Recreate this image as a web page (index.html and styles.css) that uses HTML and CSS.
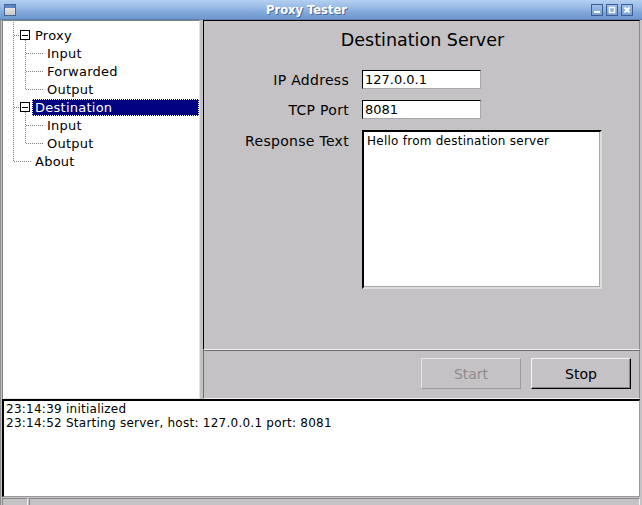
FILE: index.html
```html
<!DOCTYPE html>
<html>
<head>
<meta charset="utf-8">
<title>Proxy Tester</title>
<link rel="stylesheet" href="styles.css">
</head>
<body>
<div class="window">
  <div class="titlebar">
    <span class="app-icon"><span class="app-icon-bar"></span></span>
    <span class="title">Proxy Tester</span>
    <span class="wbtns">
      <span class="wbtn"><svg width="10" height="10" viewBox="0 0 10 10"><rect x="2" y="6" width="6" height="2" fill="#fff"/></svg></span>
      <span class="wbtn"><svg width="10" height="10" viewBox="0 0 10 10"><rect x="2.5" y="2.5" width="5" height="5" fill="none" stroke="#fff" stroke-width="1.4"/></svg></span>
      <span class="wbtn"><svg width="10" height="10" viewBox="0 0 10 10"><path d="M2.5 2.5L7.5 7.5M7.5 2.5L2.5 7.5" stroke="#fff" stroke-width="1.8"/></svg></span>
    </span>
  </div>
  <div class="client">
    <div class="top">
      <div class="tree">
        <svg class="tree-lines" width="196" height="150" viewBox="0 0 196 150">
          <g stroke="#808080" stroke-width="1" stroke-dasharray="1 1" fill="none">
            <path d="M10.5 0V140"/>
            <path d="M11 13.5H17"/>
            <path d="M11 85.5H17"/>
            <path d="M11 139.5H29"/>
            <path d="M22.5 18V67"/>
            <path d="M23 31.5H41"/>
            <path d="M23 49.5H41"/>
            <path d="M23 67.5H41"/>
            <path d="M22.5 90V121"/>
            <path d="M23 103.5H41"/>
            <path d="M23 121.5H41"/>
          </g>
          <g stroke="#000" stroke-width="1" fill="#fff">
            <rect x="17.5" y="8.5" width="9" height="9"/>
            <rect x="17.5" y="80.5" width="9" height="9"/>
          </g>
          <g stroke="#000" stroke-width="1">
            <path d="M19 13.5H25"/>
            <path d="M19 85.5H25"/>
          </g>
        </svg>
        <div class="row lvl0"><span class="label">Proxy</span></div>
        <div class="row lvl1"><span class="label">Input</span></div>
        <div class="row lvl1"><span class="label">Forwarded</span></div>
        <div class="row lvl1"><span class="label">Output</span></div>
        <div class="row lvl0"><span class="label selected">Destination</span></div>
        <div class="row lvl1"><span class="label">Input</span></div>
        <div class="row lvl1"><span class="label">Output</span></div>
        <div class="row lvl0"><span class="label">About</span></div>
      </div>
      <div class="splitter"></div>
      <div class="right">
        <div class="form">
          <div class="heading">Destination Server</div>
          <div class="fields">
            <div class="flabel">IP Address</div>
            <div class="input">127.0.0.1</div>
            <div class="flabel">TCP Port</div>
            <div class="input">8081</div>
            <div class="flabel top-align">Response Text</div>
            <div class="textarea">Hello from destination server</div>
          </div>
        </div>
        <div class="buttonbar">
          <div class="btn disabled">Start</div>
          <div class="btn">Stop</div>
        </div>
      </div>
    </div>
    <div class="log">
      <div class="logline">23:14:39 initialized</div>
      <div class="logline">23:14:52 Starting server, host: 127.0.0.1 port: 8081</div>
    </div>
    <div class="status">
      <div class="sbox small"></div>
      <div class="sbox wide"></div>
    </div>
  </div>
</div>
</body>
</html>
```
FILE: styles.css
```css
html, body {
  margin: 0;
  padding: 0;
  background: #c4c2c4;
}
body {
  width: 642px;
  height: 505px;
  overflow: hidden;
  font-family: "DejaVu Sans", "Liberation Sans", sans-serif;
  color: #000;
}
.window {
  width: 642px;
  height: 505px;
  display: flex;
  flex-direction: column;
  background: #c4c2c4;
}
.titlebar {
  height: 20px;
  flex: none;
  display: flex;
  align-items: center;
  background: linear-gradient(#b3cff0 0%, #9bbde6 35%, #7ea5d8 70%, #6f98cf 100%);
  border-bottom: 1px solid #5b7fb0;
  box-sizing: border-box;
}
.app-icon {
  width: 12px;
  height: 12px;
  margin-left: 4px;
  border: 1px solid #45679a;
  background: linear-gradient(#f2f2f2, #c8c8c8);
  box-sizing: border-box;
  display: flex;
  flex-direction: column;
}
.app-icon-bar {
  height: 3px;
  background: #5c86c4;
}
.title {
  flex: 1;
  text-align: center;
  color: #fff;
  font-weight: bold;
  font-size: 11.5px;
  text-shadow: 1px 1px 0 #4a6a98;
  padding-left: 6px;
}
.wbtns {
  display: flex;
  gap: 3px;
  margin-right: 9px;
}
.wbtn {
  width: 12px;
  height: 12px;
  box-sizing: border-box;
  border: 1px solid #3d5d92;
  background: linear-gradient(#9fbfe8, #7aa0d4);
  display: flex;
  align-items: center;
  justify-content: center;
}
.client {
  flex: 1;
  display: flex;
  flex-direction: column;
  padding: 0 2px 0 2px;
  border-left: 1px solid #8e8e8e;
  min-height: 0;
}
.top {
  height: 379px;
  flex: none;
  display: flex;
}
.tree {
  width: 198px;
  flex: none;
  box-sizing: border-box;
  background: #fff;
  border: 1px solid;
  border-color: #808080 #e4e4e4 #e4e4e4 #808080;
  padding-top: 5px;
  position: relative;
  margin-left: -1px;
}
.tree-lines {
  position: absolute;
  left: 0;
  top: 1px;
}
.row {
  height: 18px;
  display: flex;
  align-items: center;
  font-size: 13px;
  letter-spacing: 0.25px;
}
.row.lvl0 { padding-left: 29px; }
.row.lvl1 { padding-left: 41px; }
.label {
  padding: 0 3px;
  height: 17px;
  line-height: 17px;
  box-sizing: border-box;
}
.label.selected {
  flex: 1;
  background: #000080;
  color: #fff;
  outline: 1px dotted #fff;
  outline-offset: -1px;
}
.splitter {
  width: 3px;
  flex: none;
  background: #c4c2c4;
}
.right {
  flex: 1;
  display: flex;
  flex-direction: column;
}
.form {
  height: 330px;
  box-sizing: border-box;
  border: 1px solid;
  border-color: #000 #8a8a8a #f0f0f0 #000;
  padding-top: 8px;
}
.heading {
  text-align: center;
  font-size: 17.5px;
  line-height: 22px;
  height: 22px;
  margin-bottom: 19px;
  padding-left: 2px;
}
.fields {
  display: grid;
  grid-template-columns: 145px 240px;
  grid-template-rows: 19px 19px 159px;
  column-gap: 13px;
  row-gap: 11px;
  font-size: 14px;
}
.flabel {
  text-align: right;
  align-self: center;
  line-height: 19px;
  padding-top: 1px;
  letter-spacing: 0.3px;
}
.flabel.top-align {
  align-self: start;
  line-height: 20px;
}
.input {
  width: 119px;
  height: 19px;
  box-sizing: border-box;
  background: #fff;
  border: 1px solid;
  border-color: #000 #a8a8a8 #a8a8a8 #000;
  padding-left: 2px;
  line-height: 18px;
  font-size: 13px;
}
.textarea {
  width: 240px;
  height: 159px;
  box-sizing: border-box;
  background: #fff;
  border-style: solid;
  border-width: 2px;
  border-color: #000 #dcdcdc #dcdcdc #000;
  box-shadow: inset -1px -1px 0 #a8a8a8;
  padding: 1px 0 0 3px;
  line-height: 16px;
  font-size: 12px;
  letter-spacing: 0.25px;
}
.buttonbar {
  flex: 1;
  box-sizing: border-box;
  border: 1px solid;
  border-color: #707070 #8a8a8a #f0f0f0 #707070;
  display: flex;
  justify-content: flex-end;
  align-items: flex-start;
  gap: 10px;
  padding: 7px 8px 0 0;
}
.btn {
  width: 100px;
  height: 31px;
  box-sizing: border-box;
  border: 1px solid;
  border-color: #f4f4f4 #000 #000 #f4f4f4;
  box-shadow: inset -1px -1px 0 #8a8a8a;
  display: flex;
  align-items: center;
  justify-content: center;
  font-size: 14px;
  color: #000;
}
.btn.disabled {
  color: #8e8c8e;
  border-color: #e6e6e6 #9a9a9a #9a9a9a #e6e6e6;
  box-shadow: none;
}
.log {
  height: 98px;
  flex: none;
  box-sizing: border-box;
  background: #fff;
  border-style: solid;
  border-width: 2px 1px 1px 2px;
  border-color: #000 #9a9a9a #9a9a9a #000;
  padding: 1px 0 0 2px;
  font-size: 12px;
  letter-spacing: 0.25px;
  line-height: 14px;
  margin-left: -1px;
}
.logline {
  height: 14px;
  white-space: nowrap;
}
.status {
  flex: 1;
  display: flex;
  gap: 1px;
  padding-top: 1px;
  margin-left: -1px;
}
.sbox {
  box-sizing: border-box;
  border: 1px solid;
  border-color: #8a8a8a #f0f0f0 #f0f0f0 #8a8a8a;
  height: 20px;
}
.sbox.small { width: 26px; }
.sbox.wide { flex: 1; }
```
